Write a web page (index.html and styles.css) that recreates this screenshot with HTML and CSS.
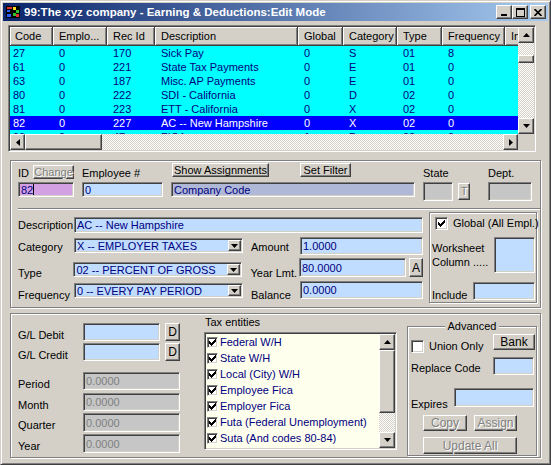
FILE: index.html
```html
<!DOCTYPE html>
<html lang="en">
<head>
    <meta charset="UTF-8">
    <title>99:The xyz company - Earning &amp; Deductions</title>
    <link rel="stylesheet" href="styles.css">
</head>
<body>
<div class="window">
    <!-- caption -->
    <div class="titlebar">
        <svg class="app-icon" width="16" height="16" viewBox="0 0 16 16">
            <rect x="1" y="2" width="14" height="12" fill="#000"/>
            <rect x="2" y="3" width="5" height="2" fill="#e03030"/>
            <rect x="2" y="6" width="3" height="2" fill="#3060ff"/>
            <rect x="8" y="3" width="3" height="3" fill="#ffe020"/>
            <rect x="11" y="6" width="3" height="3" fill="#30c030"/>
            <rect x="8" y="9" width="3" height="3" fill="#30c030"/>
            <rect x="2" y="10" width="4" height="3" fill="#3060ff"/>
            <rect x="11" y="10" width="3" height="3" fill="#e03030"/>
        </svg>
        <span class="title-text">99:The xyz company - Earning &amp; Deductions:Edit Mode</span>
        <div class="caption-buttons">
            <span class="cap-btn raised"><svg width="8" height="8" viewBox="0 0 8 8"><rect x="1" y="6" width="6" height="2"/></svg></span>
            <span class="cap-btn raised"><svg width="9" height="9" viewBox="0 0 9 9"><path d="M0 0h9v9H0z M1 2v6h7V2z" fill-rule="evenodd"/></svg></span>
            <span class="cap-btn cap-close raised"><svg width="8" height="7" viewBox="0 0 8 7"><path d="M0.5 0 L7.5 7 M7.5 0 L0.5 7" stroke="#000" stroke-width="1.6"/></svg></span>
        </div>
    </div>

    <!-- record list -->
    <div class="grid-box sunken">
        <div class="grid-main">
            <div class="grid-view">
                <table class="grid">
                    <colgroup>
                        <col class="c-code"><col class="c-emp"><col class="c-rec"><col class="c-desc">
                        <col class="c-global"><col class="c-cat"><col class="c-type"><col class="c-freq"><col class="c-inc">
                    </colgroup>
                    <thead>
                        <tr>
                            <th>Code</th><th>Emplo...</th><th>Rec Id</th><th>Description</th>
                            <th>Global</th><th>Category</th><th>Type</th><th>Frequency</th><th>Include</th>
                        </tr>
                    </thead>
                    <tbody>
                        <tr><td>27</td><td>0</td><td>170</td><td>Sick Pay</td><td>0</td><td>S</td><td>01</td><td>8</td><td></td></tr>
                        <tr><td>61</td><td>0</td><td>221</td><td>State Tax Payments</td><td>0</td><td>E</td><td>01</td><td>0</td><td></td></tr>
                        <tr><td>63</td><td>0</td><td>187</td><td>Misc. AP Payments</td><td>0</td><td>E</td><td>01</td><td>0</td><td></td></tr>
                        <tr><td>80</td><td>0</td><td>222</td><td>SDI - California</td><td>0</td><td>D</td><td>02</td><td>0</td><td></td></tr>
                        <tr><td>81</td><td>0</td><td>223</td><td>ETT - California</td><td>0</td><td>X</td><td>02</td><td>0</td><td></td></tr>
                        <tr class="selected"><td>82</td><td>0</td><td>227</td><td>AC -- New Hampshire</td><td>0</td><td>X</td><td>02</td><td>0</td><td></td></tr>
                        <tr><td>90</td><td>0</td><td>47</td><td>FICA</td><td>1</td><td>D</td><td>02</td><td>0</td><td></td></tr>
                    </tbody>
                </table>
            </div>
            <div class="hscroll">
                <span class="sb-btn sb-h raised"><svg width="4" height="7" viewBox="0 0 4 7"><polygon points="4,0 4,7 0,3.5"/></svg></span>
                <span class="sb-thumb-h raised"></span>
                <span class="sb-track"></span>
                <span class="sb-btn sb-h raised"><svg width="4" height="7" viewBox="0 0 4 7"><polygon points="0,0 0,7 4,3.5"/></svg></span>
            </div>
        </div>
        <div class="vscroll">
            <span class="sb-btn raised"><svg width="7" height="4" viewBox="0 0 7 4"><polygon points="0,4 7,4 3.5,0"/></svg></span>
            <span class="sb-track sb-track-v"><span class="sb-thumb-v raised"></span></span>
            <span class="sb-btn raised"><svg width="7" height="4" viewBox="0 0 7 4"><polygon points="0,0 7,0 3.5,4"/></svg></span>
            <span class="sb-corner"></span>
        </div>
    </div>

    <!-- record details -->
    <div class="panel panel-top etched">
        <div class="row row-a">
            <span class="lbl lbl-id">ID</span>
            <div class="btn raised disabled btn-change">Change</div>
            <span class="lbl lbl-emp">Employee #</span>
            <div class="btn raised btn-show">Show Assignments</div>
            <div class="btn raised btn-filter">Set Filter</div>
            <span class="lbl lbl-state">State</span>
            <span class="lbl">Dept.</span>
        </div>
        <div class="row row-b">
            <div class="field sunken f-id">82<span class="caret"></span></div>
            <div class="field sunken f-emp">0</div>
            <div class="field sunken f-company">Company Code</div>
            <div class="field sunken f-gray f-state"></div>
            <div class="btn raised disabled btn-t">T</div>
            <div class="field sunken f-gray f-dept"></div>
        </div>
        <div class="separator"></div>
        <div class="section-c">
            <div class="detail-col">
                <div class="row row-desc">
                    <span class="lbl lbl-left">Description</span>
                    <div class="field sunken f-desc">AC -- New Hampshire</div>
                </div>
                <div class="row row-cat">
                    <span class="lbl lbl-left">Category</span>
                    <div class="field sunken combo">
                        <span>X -- EMPLOYER TAXES</span>
                        <span class="drop raised"><svg width="7" height="4" viewBox="0 0 7 4"><polygon points="0,0 7,0 3.5,4"/></svg></span>
                    </div>
                    <span class="lbl lbl-mid">Amount</span>
                    <div class="field sunken f-num">1.0000</div>
                </div>
                <div class="row row-type">
                    <span class="lbl lbl-left">Type</span>
                    <div class="field sunken combo">
                        <span>02 -- PERCENT OF GROSS</span>
                        <span class="drop raised"><svg width="7" height="4" viewBox="0 0 7 4"><polygon points="0,0 7,0 3.5,4"/></svg></span>
                    </div>
                    <span class="lbl lbl-mid">Year Lmt.</span>
                    <div class="field sunken f-num f-year">80.0000</div>
                    <div class="btn raised btn-a">A</div>
                </div>
                <div class="row row-freq">
                    <span class="lbl lbl-left">Frequency</span>
                    <div class="field sunken combo">
                        <span>0 -- EVERY PAY PERIOD</span>
                        <span class="drop raised"><svg width="7" height="4" viewBox="0 0 7 4"><polygon points="0,0 7,0 3.5,4"/></svg></span>
                    </div>
                    <span class="lbl lbl-mid">Balance</span>
                    <div class="field sunken f-num">0.0000</div>
                </div>
            </div>
            <div class="global-box etched">
                <div class="row global-row">
                    <span class="check sunken"><svg width="7" height="7" viewBox="0 0 7 7"><path d="M0 2h1v1h1v1h1V3h1V2h1V1h1V0h1v3H6v1H5v1H4v1H3v1H2V6H1V5H0z"/></svg></span>
                    <span class="lbl global-lbl">Global (All Empl.)</span>
                </div>
                <div class="row worksheet-row">
                    <span class="lbl worksheet-lbl">Worksheet<br>Column .....</span>
                    <div class="field sunken f-worksheet"></div>
                </div>
                <div class="row include-row">
                    <span class="lbl include-lbl">Include</span>
                    <div class="field sunken f-include"></div>
                </div>
            </div>
        </div>
    </div>

    <!-- accounts, taxes, advanced -->
    <div class="panel panel-bottom etched">
        <div class="gl-col">
            <div class="row row-gl">
                <span class="lbl lbl-gl">G/L Debit</span>
                <div class="field sunken f-gl"></div>
                <div class="btn raised btn-d">D</div>
            </div>
            <div class="row row-gl row-credit">
                <span class="lbl lbl-gl">G/L Credit</span>
                <div class="field sunken f-gl"></div>
                <div class="btn raised btn-d">D</div>
            </div>
            <div class="row row-total row-period">
                <span class="lbl lbl-gl">Period</span>
                <div class="field sunken f-gray f-total">0.0000</div>
            </div>
            <div class="row row-total row-month">
                <span class="lbl lbl-gl">Month</span>
                <div class="field sunken f-gray f-total">0.0000</div>
            </div>
            <div class="row row-total row-quarter">
                <span class="lbl lbl-gl">Quarter</span>
                <div class="field sunken f-gray f-total">0.0000</div>
            </div>
            <div class="row row-total row-quarter">
                <span class="lbl lbl-gl">Year</span>
                <div class="field sunken f-gray f-total">0.0000</div>
            </div>
        </div>

        <div class="tax-col">
            <div class="tax-title">Tax entities</div>
            <div class="listbox sunken">
                <div class="list-items">
                    <div class="list-item"><span class="check check-sm sunken"><svg width="7" height="7" viewBox="0 0 7 7"><path d="M0 2h1v1h1v1h1V3h1V2h1V1h1V0h1v3H6v1H5v1H4v1H3v1H2V6H1V5H0z"/></svg></span>Federal W/H</div>
                    <div class="list-item"><span class="check check-sm sunken"><svg width="7" height="7" viewBox="0 0 7 7"><path d="M0 2h1v1h1v1h1V3h1V2h1V1h1V0h1v3H6v1H5v1H4v1H3v1H2V6H1V5H0z"/></svg></span>State W/H</div>
                    <div class="list-item"><span class="check check-sm sunken"><svg width="7" height="7" viewBox="0 0 7 7"><path d="M0 2h1v1h1v1h1V3h1V2h1V1h1V0h1v3H6v1H5v1H4v1H3v1H2V6H1V5H0z"/></svg></span>Local (City) W/H</div>
                    <div class="list-item"><span class="check check-sm sunken"><svg width="7" height="7" viewBox="0 0 7 7"><path d="M0 2h1v1h1v1h1V3h1V2h1V1h1V0h1v3H6v1H5v1H4v1H3v1H2V6H1V5H0z"/></svg></span>Employee Fica</div>
                    <div class="list-item"><span class="check check-sm sunken"><svg width="7" height="7" viewBox="0 0 7 7"><path d="M0 2h1v1h1v1h1V3h1V2h1V1h1V0h1v3H6v1H5v1H4v1H3v1H2V6H1V5H0z"/></svg></span>Employer Fica</div>
                    <div class="list-item"><span class="check check-sm sunken"><svg width="7" height="7" viewBox="0 0 7 7"><path d="M0 2h1v1h1v1h1V3h1V2h1V1h1V0h1v3H6v1H5v1H4v1H3v1H2V6H1V5H0z"/></svg></span>Futa (Federal Unemployment)</div>
                    <div class="list-item"><span class="check check-sm sunken"><svg width="7" height="7" viewBox="0 0 7 7"><path d="M0 2h1v1h1v1h1V3h1V2h1V1h1V0h1v3H6v1H5v1H4v1H3v1H2V6H1V5H0z"/></svg></span>Suta (And codes 80-84)</div>
                </div>
                <div class="list-scroll">
                    <span class="sb-btn raised"><svg width="7" height="4" viewBox="0 0 7 4"><polygon points="0,4 7,4 3.5,0"/></svg></span>
                    <span class="list-thumb raised"></span>
                    <span class="sb-track"></span>
                    <span class="sb-btn raised"><svg width="7" height="4" viewBox="0 0 7 4"><polygon points="0,0 7,0 3.5,4"/></svg></span>
                </div>
            </div>
        </div>

        <div class="advanced etched">
            <div class="group-title">Advanced</div>
            <div class="row adv-row-1">
                <span class="check sunken"></span>
                <span class="lbl union-lbl">Union Only</span>
                <div class="btn raised btn-bank">Bank</div>
            </div>
            <div class="row adv-row-2">
                <span class="lbl adv-lbl">Replace Code</span>
                <div class="field sunken f-replace"></div>
            </div>
            <div class="row adv-row-3">
                <span class="lbl adv-lbl expires-lbl">Expires</span>
                <div class="field sunken f-expires"></div>
            </div>
            <div class="row adv-row-4">
                <div class="btn raised disabled btn-copy">Copy</div>
                <div class="btn raised disabled btn-assign">Assign</div>
            </div>
            <div class="row adv-row-5">
                <div class="btn raised disabled btn-update">Update All</div>
            </div>
        </div>
    </div>
</div>
</body>
</html>
```

FILE: styles.css
```css
* {
    box-sizing: border-box;
}
body {
    margin: 0;
    background: #d4d0c8;
    font-family: "Liberation Sans", Arial, sans-serif;
    font-size: 11px;
    color: #000;
}

/* 3D borders */
.raised {
    background: #d4d0c8;
    border: 1px solid;
    border-color: #fff #404040 #404040 #fff;
    box-shadow: inset -1px -1px #808080;
}
.sunken {
    border: 1px solid;
    border-color: #808080 #fff #fff #808080;
    box-shadow: inset 1px 1px #404040, inset -1px -1px #d4d0c8;
    padding: 1px;
}
.etched {
    border: 1px solid #808080;
    box-shadow: inset 1px 1px #fff, 1px 1px #fff;
}

/* window frame */
.window {
    width: 551px;
    height: 465px;
    padding: 2px;
    background: #d4d0c8;
    border: 1px solid;
    border-color: #d4d0c8 #404040 #404040 #d4d0c8;
    box-shadow: inset 1px 1px #fff, inset -1px -1px #808080;
    overflow: hidden;
}
.titlebar {
    display: flex;
    align-items: center;
    height: 18px;
    background: linear-gradient(to right, #0a246a, #a6caf0);
    color: #fff;
}
.app-icon {
    flex: none;
    margin-left: 2px;
}
.title-text {
    margin-left: 3px;
    font-weight: bold;
    font-size: 11.5px;
    white-space: nowrap;
}
.caption-buttons {
    display: flex;
    margin-left: auto;
    margin-right: 2px;
}
.cap-btn {
    display: flex;
    align-items: center;
    justify-content: center;
    width: 16px;
    height: 14px;
}
.cap-close {
    margin-left: 2px;
}

/* record grid */
.grid-box {
    display: flex;
    width: 528px;
    height: 127px;
    margin: 4px 0 0 5px;
}
.grid-main {
    display: flex;
    flex-direction: column;
    width: 508px;
}
.grid-view {
    height: 107px;
    overflow: hidden;
    background: #00ffff;
}
.grid {
    table-layout: fixed;
    width: 555px;
    border-collapse: separate;
    border-spacing: 0;
}
.c-code { width: 43px; }
.c-emp { width: 54px; }
.c-rec { width: 48px; }
.c-desc { width: 143px; }
.c-global { width: 45px; }
.c-cat { width: 54px; }
.c-type { width: 45px; }
.c-freq { width: 63px; }
.c-inc { width: 60px; }
.grid th {
    height: 19px;
    padding: 0 0 0 6px;
    text-align: left;
    font-weight: normal;
    background: #d4d0c8;
    border-right: 1px solid #404040;
    border-bottom: 1px solid #404040;
    box-shadow: inset 1px 1px #fff, inset -1px -1px #808080;
    white-space: nowrap;
    overflow: hidden;
}
.grid th:first-child {
    padding-left: 5px;
}
.grid td {
    height: 14px;
    line-height: 14px;
    padding: 0 0 0 6px;
    color: #000080;
    white-space: nowrap;
    overflow: hidden;
}
.grid td:first-child {
    padding-left: 3px;
}
.grid .selected td {
    background: #0000ff;
    color: #fff;
}

/* scrollbars */
.hscroll {
    display: flex;
    height: 16px;
}
.vscroll {
    display: flex;
    flex-direction: column;
    width: 16px;
}
.sb-btn {
    display: flex;
    flex: none;
    align-items: center;
    justify-content: center;
    width: 16px;
    height: 16px;
}
.sb-h {
    width: 15px;
}
.sb-track {
    flex: 1;
    background: repeating-conic-gradient(#fff 0 25%, #d4d0c8 0 50%) 0 0 / 2px 2px;
}
.sb-track-v {
    display: flex;
    flex-direction: column;
}
.sb-thumb-h {
    width: 77px;
    flex: none;
}
.sb-thumb-v {
    height: 8px;
    margin-top: 12px;
}
.sb-corner {
    height: 16px;
    background: #d4d0c8;
}

/* panels */
.panel {
    width: 531px;
    margin-left: 7px;
}
.panel-top {
    height: 148px;
    margin-top: 8px;
}
.panel-bottom {
    display: flex;
    align-items: flex-start;
    height: 145px;
    margin-top: 5px;
}
.row {
    display: flex;
    align-items: flex-start;
    flex: none;
}
.lbl {
    line-height: 14px;
    white-space: nowrap;
}
.btn {
    display: flex;
    align-items: center;
    justify-content: center;
    flex: none;
    line-height: 1;
    white-space: nowrap;
}
.btn.disabled {
    color: #808080;
    text-shadow: 1px 1px #fff;
}
.field {
    display: flex;
    align-items: center;
    flex: none;
    padding: 1px 2px;
    height: 15px;
    background: #c0dcff;
    color: #000080;
    white-space: nowrap;
    overflow: hidden;
}
.f-gray {
    background: #c6c6c6;
    color: #808080;
}
.caret {
    display: inline-block;
    width: 1px;
    height: 11px;
    background: #000;
}
.check {
    display: flex;
    align-items: center;
    justify-content: center;
    flex: none;
    width: 13px;
    height: 13px;
    padding: 0;
    background: #fff;
}
.check-sm {
    width: 11px;
    height: 11px;
}

/* top panel: id row */
.row-a {
    height: 16px;
    margin: 2px 0 0 7px;
}
.row-a .lbl {
    padding-top: 3px;
}
.lbl-id { width: 15px; }
.btn-change {
    width: 41px;
    height: 14px;
    margin-top: 2px;
}
.lbl-emp {
    width: 90px;
    margin-left: 8px;
}
.btn-show {
    width: 97px;
    height: 14px;
}
.btn-filter {
    width: 51px;
    height: 14px;
    margin-left: 31px;
}
.lbl-state {
    width: 65px;
    margin-left: 72px;
}
.row-b {
    height: 19px;
    margin: 3px 0 0 7px;
}
.f-id {
    width: 56px;
    background: #d4a0e4;
}
.f-emp {
    width: 81px;
    margin-left: 8px;
}
.f-company {
    width: 244px;
    margin-left: 8px;
    background: #b0b8d8;
}
.f-state {
    width: 30px;
    height: 19px;
    margin-left: 8px;
}
.btn-t {
    width: 12px;
    height: 17px;
    margin: 1px 0 0 5px;
}
.f-dept {
    width: 44px;
    height: 19px;
    margin-left: 18px;
}
.separator {
    width: 522px;
    height: 2px;
    margin: 7px 0 0 7px;
    border-top: 1px solid #808080;
    border-bottom: 1px solid #fff;
}

/* top panel: details */
.section-c {
    display: flex;
    align-items: flex-start;
    margin-left: 7px;
}
.detail-col {
    width: 405px;
}
.lbl-left { width: 56px; }
.lbl-mid {
    width: 49px;
    margin-left: 8px;
}
.row-desc {
    height: 16px;
    margin-top: 7px;
}
.row-desc .lbl { padding-top: 1px; }
.f-desc {
    width: 349px;
    height: 16px;
}
.combo {
    width: 169px;
    padding-right: 1px;
}
.combo .drop {
    display: flex;
    align-items: center;
    justify-content: center;
    width: 13px;
    height: 11px;
    margin-left: auto;
}
.f-num {
    width: 123px;
    height: 18px;
}
.row-cat {
    height: 18px;
    margin-top: 4px;
}
.row-cat .lbl { padding-top: 3px; }
.row-cat .combo { margin-top: 1px; }
.row-type {
    height: 19px;
    margin-top: 3px;
}
.row-type .lbl { padding-top: 8px; }
.row-type .combo { margin-top: 4px; }
.f-year {
    width: 107px;
    height: 19px;
}
.btn-a {
    width: 14px;
    height: 19px;
    margin-left: 3px;
    font-size: 12px;
}
.row-freq {
    height: 18px;
    margin-top: 4px;
}
.row-freq .lbl { padding-top: 7px; }
.row-freq .combo { margin-top: 2px; }

.global-box {
    width: 108px;
    height: 91px;
    margin: 2px 0 0 6px;
}
.global-row {
    height: 13px;
    margin: 4px 0 0 5px;
}
.global-lbl {
    margin-left: 5px;
    line-height: 13px;
}
.worksheet-row {
    margin-top: 7px;
}
.worksheet-lbl {
    width: 62px;
    margin-left: 2px;
    padding-top: 4px;
}
.f-worksheet {
    width: 41px;
    height: 36px;
}
.include-row {
    margin-top: 9px;
}
.include-lbl {
    width: 41px;
    margin-left: 2px;
    padding-top: 6px;
}
.f-include {
    width: 62px;
    height: 18px;
}

/* bottom panel: G/L and totals */
.gl-col {
    width: 162px;
    margin-left: 7px;
    padding-top: 9px;
}
.lbl-gl {
    width: 65px;
    padding-top: 5px;
}
.row-gl { height: 18px; }
.row-credit { margin-top: 2px; }
.f-gl {
    width: 77px;
    height: 18px;
}
.btn-d {
    width: 15px;
    height: 18px;
    margin-left: 5px;
    font-size: 12px;
}
.row-total {
    height: 18px;
    margin-top: 3px;
}
.row-period { margin-top: 11px; }
.row-quarter {
    height: 19px;
    margin-top: 2px;
}
.f-total {
    width: 97px;
    height: 100%;
}

/* bottom panel: tax entities */
.tax-col {
    width: 193px;
    margin-left: 24px;
}
.tax-title {
    margin-top: 1px;
    padding-left: 1px;
    line-height: 14px;
}
.listbox {
    display: flex;
    height: 118px;
    margin-top: 3px;
    background: #ffffee;
}
.list-items {
    flex: 1;
}
.list-item {
    display: flex;
    align-items: center;
    height: 16px;
    color: #000080;
    white-space: nowrap;
}
.list-item .check {
    margin: 0 2px 0 1px;
}
.list-scroll {
    display: flex;
    flex-direction: column;
    width: 16px;
}
.list-thumb {
    height: 63px;
    flex: none;
}

/* bottom panel: advanced */
.advanced {
    width: 130px;
    height: 130px;
    margin: 12px 0 0 10px;
}
.group-title {
    width: fit-content;
    margin: -8px auto 0;
    padding: 0 3px;
    line-height: 14px;
    background: #d4d0c8;
}
.adv-row-1 {
    height: 16px;
    margin-top: 1px;
}
.adv-row-1 .check {
    margin: 6px 0 0 3px;
}
.union-lbl {
    margin-left: 5px;
    padding-top: 5px;
}
.btn-bank {
    width: 42px;
    height: 16px;
    margin: 0 1px 0 auto;
    font-size: 12px;
}
.adv-lbl {
    margin-left: 3px;
    padding-top: 4px;
}
.adv-row-2 {
    height: 18px;
    margin-top: 7px;
}
.f-replace {
    width: 41px;
    height: 18px;
    margin: 0 2px 0 auto;
}
.adv-row-3 {
    height: 19px;
    margin-top: 13px;
}
.expires-lbl {
    padding-top: 9px;
}
.f-expires {
    width: 80px;
    height: 19px;
    margin: 0 2px 0 auto;
}
.adv-row-4 {
    margin-top: 8px;
}
.btn-copy {
    width: 44px;
    height: 16px;
    margin-left: 15px;
    font-size: 12px;
}
.btn-assign {
    width: 43px;
    height: 16px;
    margin-left: 7px;
    font-size: 12px;
}
.adv-row-5 {
    margin-top: 6px;
}
.btn-update {
    width: 94px;
    height: 17px;
    margin-left: 15px;
    font-size: 12px;
}
```
